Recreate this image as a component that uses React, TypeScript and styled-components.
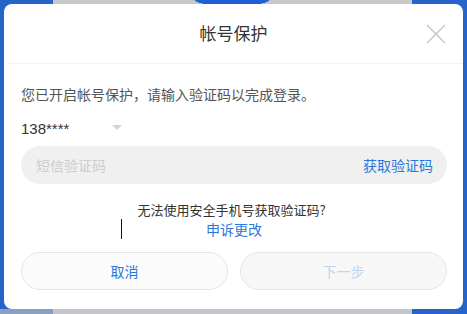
import styled, { createGlobalStyle } from "styled-components";

const GlobalStyle = createGlobalStyle`
  html, body {
    margin: 0;
    padding: 0;
  }
  body {
    font-family: "Noto Sans CJK SC", "Noto Sans", sans-serif;
  }
`;

const Backdrop = styled.div`
  width: 467px;
  height: 314px;
  box-sizing: border-box;
  padding: 4px 4px 5px 4px;
  background:
    radial-gradient(ellipse 38px 6px at 232px 0px, #1f5fd3 95%, transparent 100%),
    linear-gradient(#c8c8c8, #c8c8c8) 53px 0 / 359px 4px no-repeat,
    linear-gradient(#c4c6ca, #c4c6ca) 53px 309px / 359px 5px no-repeat,
    linear-gradient(#8aa0c2, #8aa0c2) 0 309px / 53px 5px no-repeat,
    #2764c9;
`;

const Dialog = styled.div`
  height: 100%;
  background: #ffffff;
  border-radius: 8px;
  display: flex;
  flex-direction: column;
  overflow: hidden;
`;

const Header = styled.div`
  position: relative;
  height: 59px;
  margin: 0 0 0 3px;
  border-bottom: 1px solid #f2f2f2;
  display: flex;
  align-items: center;
  justify-content: center;
  flex-shrink: 0;
`;

const Title = styled.h2`
  margin: 0 0 0 -3px;
  font-size: 17px;
  font-weight: 400;
  color: #333333;
  line-height: 24px;
  padding-bottom: 1px;
`;

const CloseButton = styled.button`
  position: absolute;
  right: 17px;
  top: 20px;
  width: 20px;
  height: 20px;
  padding: 0;
  border: none;
  background: none;
  display: flex;
  cursor: pointer;
`;

const Body = styled.div`
  padding: 0 16px 0 17px;
  display: flex;
  flex-direction: column;
`;

const Message = styled.p`
  margin: 20px 0 0;
  font-size: 14px;
  line-height: 20px;
  color: #555555;
`;

const PhoneRow = styled.div`
  margin-top: 14px;
  height: 20px;
  display: flex;
  align-items: center;
  gap: 15px;
`;

const Phone = styled.span`
  font-family: "Liberation Sans", Arial, sans-serif;
  font-size: 15px;
  color: #333333;
  width: 76px;
`;

const Caret = styled.span`
  width: 0;
  height: 0;
  border-left: 5px solid transparent;
  border-right: 5px solid transparent;
  border-top: 5px solid #c9d6ea;
  margin-top: -1px;
`;

const InputPill = styled.div`
  margin-top: 8px;
  height: 38px;
  border-radius: 19px;
  background: #f0f0f0;
  display: flex;
  align-items: center;
  justify-content: space-between;
  padding: 0 14px 0 15px;
`;

const Placeholder = styled.span`
  font-size: 14px;
  color: #cdcdcd;
`;

const LinkText = styled.span`
  font-size: 14px;
  color: #2a78dc;
  cursor: pointer;
`;

const Help = styled.div`
  position: relative;
  margin-top: 16px;
  display: flex;
  flex-direction: column;
  align-items: center;
  line-height: 19px;
`;

const HelpText = styled.span`
  font-size: 13px;
  color: #333333;
  margin-left: -5px;
`;

const AppealLink = styled(LinkText)`
  margin-top: 1px;
`;

const TextCursor = styled.span`
  position: absolute;
  left: 100px;
  top: 19px;
  width: 1px;
  height: 20px;
  background: #111111;
`;

const Actions = styled.div`
  margin-top: 13px;
  display: grid;
  grid-template-columns: 1fr 1fr;
  gap: 12px;
`;

const PillButton = styled.button<{ $disabled?: boolean }>`
  height: 38px;
  border-radius: 19px;
  border: 1px solid #e6e6e6;
  background: ${({ $disabled }) => ($disabled ? "#f7f7f7" : "#fbfbfb")};
  color: ${({ $disabled }) => ($disabled ? "#bfd4f0" : "#2a78dc")};
  font-family: "Noto Sans CJK SC", sans-serif;
  font-size: 14px;
  cursor: ${({ $disabled }) => ($disabled ? "default" : "pointer")};
`;

export default function App() {
  return (
    <>
      <GlobalStyle />
      <Backdrop>
        <Dialog>
          <Header>
            <Title>帐号保护</Title>
            <CloseButton aria-label="关闭">
              <svg width="20" height="20" viewBox="0 0 20 20">
                <path d="M1 1L19 19M19 1L1 19" stroke="#c9c9c9" strokeWidth="1.6" />
              </svg>
            </CloseButton>
          </Header>
          <Body>
            <Message>您已开启帐号保护，请输入验证码以完成登录。</Message>
            <PhoneRow>
              <Phone>138****</Phone>
              <Caret />
            </PhoneRow>
            <InputPill>
              <Placeholder>短信验证码</Placeholder>
              <LinkText>获取验证码</LinkText>
            </InputPill>
            <Help>
              <HelpText>无法使用安全手机号获取验证码?</HelpText>
              <AppealLink>申诉更改</AppealLink>
              <TextCursor />
            </Help>
            <Actions>
              <PillButton>取消</PillButton>
              <PillButton $disabled>下一步</PillButton>
            </Actions>
          </Body>
        </Dialog>
      </Backdrop>
    </>
  );
}
